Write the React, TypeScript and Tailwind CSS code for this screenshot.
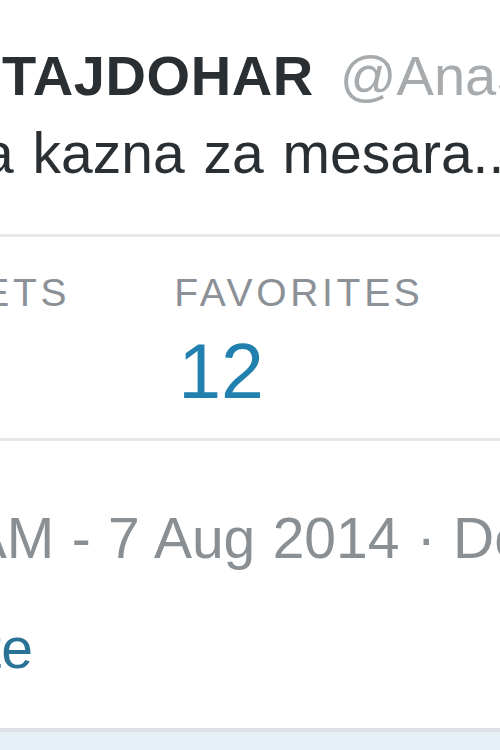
import React from 'react';

const stats = [
  { label: 'RETWEETS', count: '5' },
  { label: 'FAVORITES', count: '12' },
];

const App: React.FC = () => {
  return (
    <div className="w-[500px] h-[750px] overflow-hidden bg-white flex flex-col font-['Liberation_Sans',Arial,sans-serif]">
      {/* header: name + handle */}
      <div className="mt-[48px] h-[56px] flex items-baseline whitespace-nowrap leading-[56px]">
        <span className="ml-[2px] text-[56px] font-bold tracking-[0.6px] text-[#292f33]">TAJDOHAR</span>
        <span className="ml-[26px] text-[56px] text-[#a7abae]">@AnaStajdohar</span>
      </div>

      {/* tweet text */}
      <p className="mt-[21px] ml-[-18px] h-[57px] text-[57px] leading-[57px] text-[#292f33] whitespace-nowrap [word-spacing:3px]">
        a kazna za mesara...
      </p>

      <div className="mt-[52px] h-[3px] bg-[#e5e7e9]"></div>

      {/* stats */}
      <div className="mt-[36px] ml-[-176px] flex gap-[104px] whitespace-nowrap">
        {stats.map((s) => (
          <div key={s.label} className="flex flex-col">
            <span className="text-[39px] leading-[39px] tracking-[3.7px] text-[#8b9196]">{s.label}</span>
            <span className="mt-[21px] ml-[4px] text-[77px] leading-[77px] text-[#2180ad]">{s.count}</span>
          </div>
        ))}
      </div>

      <div className="mt-[28px] h-[3px] bg-[#e5e7e9]"></div>

      {/* timestamp */}
      <p className="mt-[69px] ml-[-188px] h-[57px] text-[57px] leading-[57px] text-[#8a8f93] whitespace-nowrap [word-spacing:1.5px]">
        10:32 AM - 7 Aug 2014 · Details
      </p>

      {/* action link */}
      <a className="mt-[53px] ml-[-173px] h-[57px] text-[57px] leading-[57px] text-[#2a7296] whitespace-nowrap">
        Favorite
      </a>

      <div className="mt-[51px] h-[4px] bg-[#dde2e6]"></div>
      <div className="flex-1 bg-[#e6f0f7]"></div>
    </div>
  );
};

export default App;
